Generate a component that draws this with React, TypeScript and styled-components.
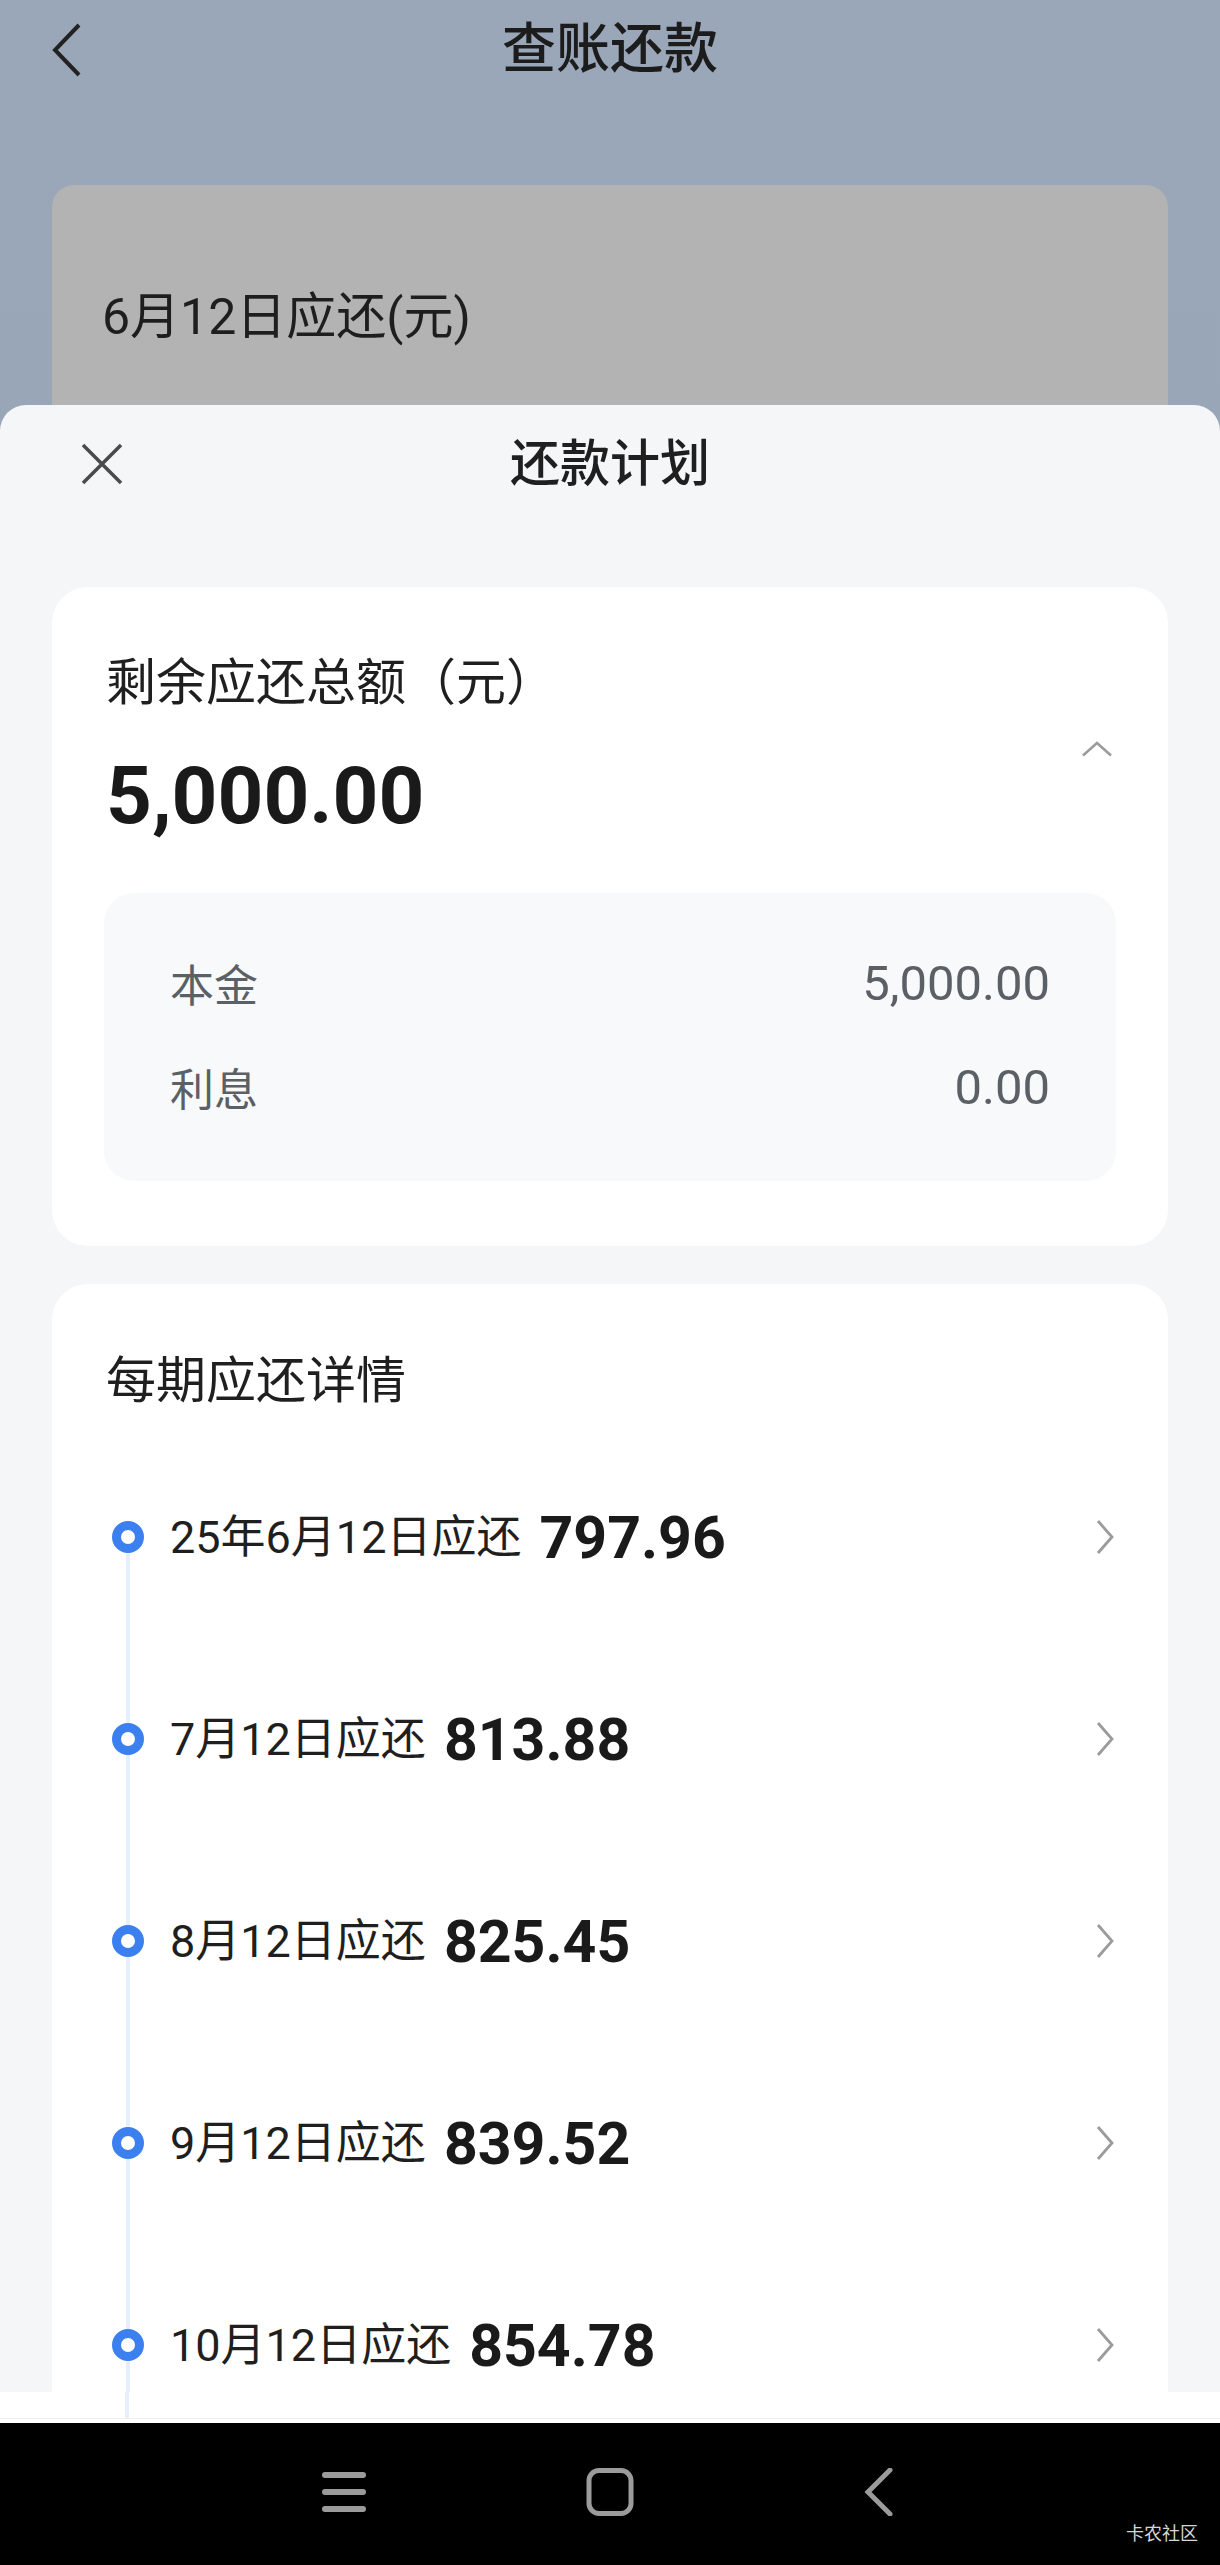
import styled, { createGlobalStyle } from 'styled-components'

const GlobalStyle = createGlobalStyle`
  html, body {
    margin: 0;
    padding: 0;
    background: #000;
  }
  body {
    font-family: Roboto, "Noto Sans CJK SC", "Noto Sans", sans-serif;
    color: #1f1f1f;
  }
  * { box-sizing: border-box; }
`

const colors = {
  backdrop: '#97a4b6',
  dimCard: '#b3b3b3',
  sheet: '#f5f6f8',
  card: '#ffffff',
  innerBox: '#f8f9fa',
  text: '#1f1f1f',
  subText: '#5b5f66',
  icon: '#9b9b9b',
  blue: '#3c80ef',
  rail: '#e5effd',
}

const Screen = styled.div`
  width: 1220px;
  height: 2565px;
  display: flex;
  flex-direction: column;
  overflow: hidden;
`

const AppArea = styled.div`
  position: relative;
  flex: 1;
  overflow: hidden;
  background: linear-gradient(180deg, #9aa7b9 0%, #95a2b4 100%);
`

const TopBar = styled.header`
  height: 100px;
  display: grid;
  grid-template-columns: 1fr auto 1fr;
  align-items: center;
  padding: 0 50px;
`

const TopTitle = styled.h1`
  margin: 0;
  font-size: 54px;
  font-weight: 500;
  line-height: 1;
  color: #1c1c1c;
`

const DimCard = styled.div`
  margin: 85px 52px 0;
  height: 420px;
  border-radius: 22px;
  background: ${colors.dimCard};
  padding: 100px 0 0 50px;
`

const DimCardLabel = styled.div`
  font-size: 50px;
  line-height: 1.3;
  color: #1e1e1e;
`

/* bottom sheet sits over the page */
const Sheet = styled.section`
  position: absolute;
  top: 405px;
  left: 0;
  right: 0;
  bottom: 0;
  display: flex;
  flex-direction: column;
  background: ${colors.sheet};
  border-radius: 26px 26px 0 0;
  overflow: hidden;
`

const SheetHeader = styled.div`
  height: 118px;
  flex-shrink: 0;
  display: grid;
  grid-template-columns: 1fr auto 1fr;
  align-items: center;
  padding: 0 80px;
`

const SheetTitle = styled.h2`
  margin: 0;
  font-size: 50px;
  font-weight: 500;
  line-height: 1;
  color: ${colors.text};
`

const SheetBody = styled.div`
  flex: 1;
  overflow: hidden;
  display: flex;
  flex-direction: column;
  gap: 38px;
  padding: 64px 52px 0;
`

const Card = styled.div`
  flex-shrink: 0;
  background: ${colors.card};
  border-radius: 36px;
  padding: 0 52px;
`

const SummaryCard = styled(Card)`
  padding-top: 65px;
  padding-bottom: 65px;
`

const SummaryHead = styled.div`
  display: flex;
  align-items: center;
  justify-content: space-between;
`

const SummaryTexts = styled.div`
  display: flex;
  flex-direction: column;
  gap: 42px;
`

const CardTitle = styled.div`
  font-size: 50px;
  line-height: 62px;
  color: ${colors.text};
  padding-left: 2px;
`

const BigAmount = styled.div`
  font-size: 80px;
  font-weight: 700;
  line-height: 80px;
  color: #1a1a1a;
  padding-left: 2px;
`

const ToggleIcon = styled.svg`
  width: 32px;
  height: 16px;
  margin-right: 3px;
  margin-top: 10px;
`

const BreakdownBox = styled.div`
  margin-top: 57px;
  background: ${colors.innerBox};
  border-radius: 30px;
  padding: 60px 66px 64px 66px;
  display: flex;
  flex-direction: column;
  gap: 44px;
`

const BreakdownRow = styled.div`
  height: 60px;
  display: flex;
  align-items: center;
  justify-content: space-between;
  font-size: 44px;
  color: ${colors.subText};
`

const BreakdownValue = styled.span`
  font-size: 49px;
`

const PlanCard = styled(Card)`
  padding-top: 66px;
`

const PlanList = styled.div`
  margin-top: 24px;
  display: flex;
  flex-direction: column;
`

const PlanRow = styled.div`
  height: 202px;
  display: flex;
  align-items: center;
`

const RailCell = styled.div<{ $first: boolean }>`
  width: 48px;
  align-self: stretch;
  display: flex;
  align-items: center;
  justify-content: center;
  background: linear-gradient(${colors.rail}, ${colors.rail}) center
    ${(p) => (p.$first ? 'bottom' : 'top')} / 4px ${(p) => (p.$first ? '50%' : '100%')} no-repeat;
`

const Dot = styled.span`
  width: 32px;
  height: 32px;
  flex-shrink: 0;
  border-radius: 50%;
  border: 9px solid ${colors.blue};
  background: #fff;
`

const PlanLabel = styled.span`
  margin-left: 18px;
  font-size: 45px;
  line-height: 1;
  color: ${colors.text};
`

const PlanAmount = styled.span`
  margin-left: 18px;
  font-size: 59px;
  font-weight: 700;
  line-height: 1;
  color: #1a1a1a;
`

const RowArrow = styled.svg`
  margin-left: auto;
  width: 20px;
  height: 36px;
  margin-right: 1px;
`

const SheetFooter = styled.div`
  height: 31px;
  flex-shrink: 0;
  background: #fff;
  display: flex;
  flex-direction: column;
`

const FooterStrip = styled.div`
  height: 27px;
  padding-left: 125px;
  border-bottom: 1px solid #efefef;
  display: flex;
`

const RailStub = styled.span`
  width: 4px;
  background: ${colors.rail};
`

const SystemNav = styled.nav`
  position: relative;
  height: 142px;
  flex-shrink: 0;
  background: #000;
  display: flex;
  align-items: center;
  justify-content: center;
  gap: 206px;
  padding-bottom: 4px;
`

const NavIcon = styled.svg`
  width: 60px;
  height: 48px;
`

const Watermark = styled.span`
  position: absolute;
  right: 22px;
  bottom: 20px;
  font-size: 18px;
  color: #d6d6d6;
  font-family: "Noto Sans CJK SC", sans-serif;
`

const BackIcon = () => (
  <svg width="34" height="56" viewBox="0 0 34 56">
    <path d="M29 3 L5 28 L29 53" fill="none" stroke="#222" strokeWidth="4" />
  </svg>
)

const CloseIcon = () => (
  <svg width="44" height="44" viewBox="0 0 44 44">
    <path d="M3 3 L41 41 M41 3 L3 41" fill="none" stroke="#4a4a4a" strokeWidth="3.5" />
  </svg>
)

const plan = [
  { label: '25年6月12日应还', amount: '797.96' },
  { label: '7月12日应还', amount: '813.88' },
  { label: '8月12日应还', amount: '825.45' },
  { label: '9月12日应还', amount: '839.52' },
  { label: '10月12日应还', amount: '854.78' },
]

export default function App() {
  return (
    <Screen>
      <GlobalStyle />
      <AppArea>
        <TopBar>
          <BackIcon />
          <TopTitle>查账还款</TopTitle>
          <span />
        </TopBar>
        <DimCard>
          <DimCardLabel>6月12日应还(元)</DimCardLabel>
        </DimCard>

        <Sheet>
          <SheetHeader>
            <CloseIcon />
            <SheetTitle>还款计划</SheetTitle>
            <span />
          </SheetHeader>

          <SheetBody>
            <SummaryCard>
              <SummaryHead>
                <SummaryTexts>
                  <CardTitle>剩余应还总额（元）</CardTitle>
                  <BigAmount>5,000.00</BigAmount>
                </SummaryTexts>
                <ToggleIcon viewBox="0 0 32 16">
                  <path d="M2 14.5 L16 2 L30 14.5" fill="none" stroke={colors.icon} strokeWidth="2.5" />
                </ToggleIcon>
              </SummaryHead>
              <BreakdownBox>
                <BreakdownRow>
                  <span>本金</span>
                  <BreakdownValue>5,000.00</BreakdownValue>
                </BreakdownRow>
                <BreakdownRow>
                  <span>利息</span>
                  <BreakdownValue>0.00</BreakdownValue>
                </BreakdownRow>
              </BreakdownBox>
            </SummaryCard>

            <PlanCard>
              <CardTitle>每期应还详情</CardTitle>
              <PlanList>
                {plan.map((item, i) => (
                  <PlanRow key={item.label}>
                    <RailCell $first={i === 0}>
                      <Dot />
                    </RailCell>
                    <PlanLabel>{item.label}</PlanLabel>
                    <PlanAmount>{item.amount}</PlanAmount>
                    <RowArrow viewBox="0 0 20 36">
                      <path d="M3 2 L17 18 L3 34" fill="none" stroke={colors.icon} strokeWidth="2.8" />
                    </RowArrow>
                  </PlanRow>
                ))}
              </PlanList>
            </PlanCard>
          </SheetBody>

          <SheetFooter>
            <FooterStrip>
              <RailStub />
            </FooterStrip>
          </SheetFooter>
        </Sheet>
      </AppArea>

      <SystemNav>
        <NavIcon viewBox="0 0 60 48">
          <path d="M11 7 H49 M11 24 H49 M11 41 H49" stroke={colors.icon} strokeWidth="6" strokeLinecap="round" />
        </NavIcon>
        <NavIcon viewBox="0 0 60 48">
          <rect x="9" y="2.5" width="42" height="43" rx="10" fill="none" stroke={colors.icon} strokeWidth="5" />
        </NavIcon>
        <NavIcon viewBox="0 0 60 48">
          <path d="M44 2 L22 24 L44 46" fill="none" stroke={colors.icon} strokeWidth="5" strokeLinecap="round" />
        </NavIcon>
        <Watermark>卡农社区</Watermark>
      </SystemNav>
    </Screen>
  )
}
